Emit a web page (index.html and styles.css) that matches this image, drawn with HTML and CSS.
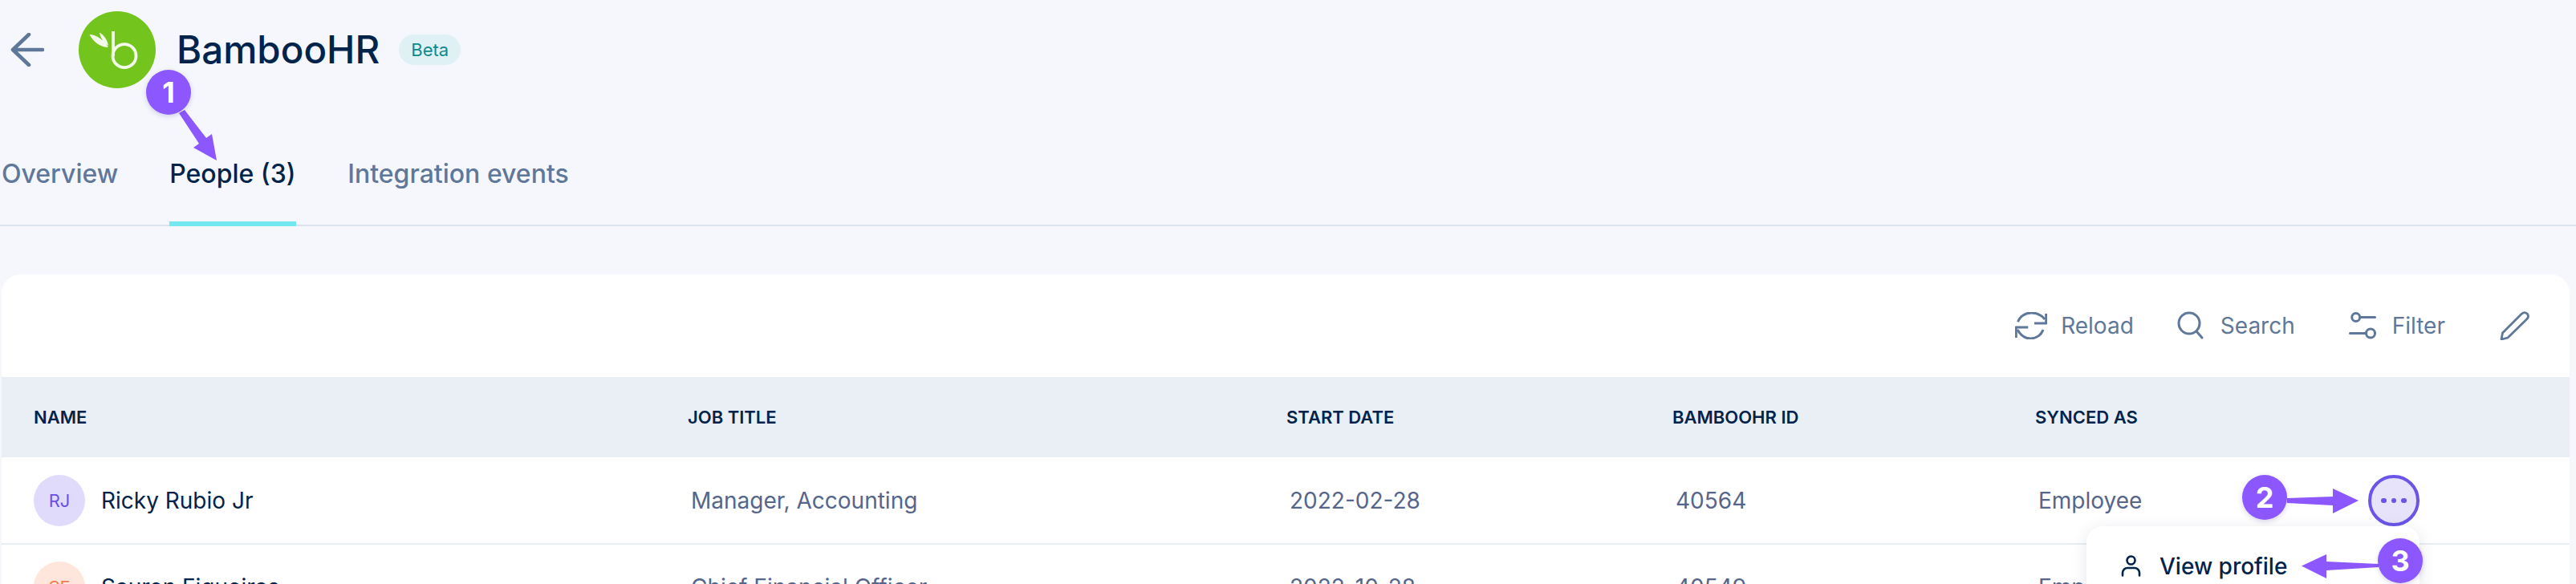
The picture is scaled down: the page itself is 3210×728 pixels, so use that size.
FILE: index.html
```html
<!DOCTYPE html>
<html lang="en">
<head>
<meta charset="utf-8">
<title>BambooHR</title>
<link rel="stylesheet" href="styles.css">
</head>
<body>
<div class="page">
  <header class="head">
    <svg class="back" viewBox="0 0 42 42" fill="none" stroke="#5f7799" stroke-width="4.600" stroke-linecap="round" stroke-linejoin="round"><path d="M23 2 3 21l20 19M3 21h37"/></svg>
    <svg class="logo" viewBox="0 0 96 96"><circle cx="48" cy="48" r="48" fill="#73c41d"/><g fill="none" stroke="#f4faea" stroke-width="3.800"><path d="M43 25v31"/><circle cx="57" cy="55.700" r="14.500"/></g><path d="M13.500 29C22 29 32 36 37 45c-10 0-19-7-23.500-16zM26 26.500C32 30 36 36 37 43c-6-4-10-10-11-16.500z" fill="#f4faea"/></svg>
    <h1 class="title">BambooHR</h1>
    <span class="beta">Beta</span>
  </header>
  <nav class="tabs">
    <a class="tab">Overview</a>
    <a class="tab active">People (3)</a>
    <a class="tab">Integration events</a>
  </nav>
  <section class="card">
    <div class="tools">
      <span class="tool reload"><svg viewBox="0 0 40 34" fill="none" stroke="#5f7799" stroke-width="3" stroke-linejoin="round"><path d="M3.600 12.300C6 5 13 1 20.500 1 27 1 33 4 37 9"/><path d="M38.700 2v12H24"/><path d="M35 22c-2.500 7-9 11-16 11-7 0-12-4-16-11"/><path d="M1.300 32V19h15"/></svg>Reload</span>
      <span class="tool search"><svg viewBox="0 0 34 36" fill="none" stroke="#5f7799" stroke-width="3" stroke-linecap="round"><circle cx="15" cy="15" r="13"/><path d="m24 25 7 8"/></svg>Search</span>
      <span class="tool filter"><svg viewBox="0 0 34 34" fill="none" stroke="#5f7799" stroke-width="3" stroke-linecap="round"><circle cx="8.700" cy="6.500" r="5"/><path d="M14 6.500h18.500M1.500 26.500H20"/><circle cx="27" cy="26.500" r="5.500"/></svg>Filter</span>
      <svg class="pen" viewBox="0 0 37 36" fill="none" stroke="#5f7799" stroke-width="2.800" stroke-linejoin="round"><path d="m2 35 1.500-8L27 3.500c2.500-2.500 5-2.500 7-.5s2 4.500-.5 7L10 33z"/></svg>
    </div>
    <div class="row hdr">
      <div>NAME</div><div>JOB TITLE</div><div>START DATE</div><div>BAMBOOHR ID</div><div>SYNCED AS</div>
    </div>
    <div class="row body">
      <div class="name"><span class="av purple">RJ</span>Ricky Rubio Jr</div>
      <div class="cell">Manager, Accounting</div>
      <div class="cell">2022-02-28</div>
      <div class="cell">40564</div>
      <div class="cell">Employee</div>
    </div>
    <div class="row body next">
      <div class="name"><span class="av orange">SF</span>Sauren Figueiras</div>
      <div class="cell">Chief Financial Officer</div>
      <div class="cell">2022-10-28</div>
      <div class="cell">40549</div>
      <div class="cell">Employee</div>
    </div>
    <button class="more"><i></i><i></i><i></i></button>
    <div class="menu"><svg viewBox="0 0 25 27" fill="none" stroke="#02234a" stroke-width="2.600" stroke-linecap="round"><circle cx="12.500" cy="6.500" r="5"/><path d="M2 25.500V22c0-3.500 3-6 6-6h9c3 0 6 2.500 6 6v3.500"/></svg>View profile</div>
  </section>
  <svg class="arrows" viewBox="0 0 3210 728" fill="#8c57ff">
    <path d="M223 141 230 137 257 172 264 167 270 200 241 184 248 179z"/>
    <path d="M2850 621 2907 619V609L2939 624 2907 640V630L2850 627z"/>
    <path d="M2964 703 2899 700V691L2868 705.500 2899 721V711L2964 707z"/>
  </svg>
  <div class="mark m1">1</div>
  <div class="mark m2">2</div>
  <div class="mark m3">3</div>
</div>
</body>
</html>
```
FILE: styles.css
```css
* { box-sizing: border-box; }
html, body { margin: 0; height: 728px; overflow: hidden; }
body { background: #f5f7fd; font-family: Inter, "Liberation Sans", sans-serif; color: #02234a; }
.page { position: relative; width: 3210px; height: 728px; overflow: hidden; }
.head { display: flex; align-items: center; height: 124px; }
.back { width: 42px; height: 42px; margin-left: 13px; }
.logo { width: 96px; height: 96px; margin-left: 43px; }
.title { margin: 0 0 0 26px; font-size: 47.500px; font-weight: 500; line-height: 1; }
.beta { margin-left: 24px; height: 38px; padding: 0 15px; border-radius: 19px; background: #e0f1f6; color: #0d8a8a; font-size: 22px; line-height: 38px; }
.tabs { display: flex; gap: 64px; height: 158px; padding: 72px 0 0 2px; margin-bottom: 60px; border-bottom: 2px solid #dde3ee; }
.tab { height: 86px; font-size: 32px; font-weight: 500; color: #5f7799; line-height: 42px; }
.tab.active { min-width: 158px; color: #02234a; border-bottom: 6px solid #73e8f0; }
.card { position: relative; height: 386px; margin: 0 0 0 2px; width: 3200px; background: #fff; border-radius: 24px 24px 0 0; }
.tools { display: flex; align-items: center; justify-content: flex-end; height: 128px; padding-right: 50px; }
.tool { display: flex; align-items: center; gap: 20px; font-size: 28px; color: #5f7799; }
.reload { gap: 17px; margin-right: 54px; }
.search { margin-right: 67px; }
.filter { margin-right: 68px; }
.reload svg { width: 40px; height: 34px; }
.search svg { width: 34px; height: 36px; }
.filter svg { width: 34px; height: 34px; }
.pen { width: 37px; height: 36px; }
.row { display: grid; grid-template-columns: 815px 746px 481px 452px 1fr; padding-left: 40px; align-items: center; }
.hdr { height: 100px; background: #eaeff5; font-size: 22px; font-weight: 600; }
.body { height: 108px; font-size: 28px; }
.next { margin-top: -1px; border-top: 2px solid #e8edf1; }
.name { display: flex; align-items: center; gap: 20px; }
.cell { padding-left: 4px; color: #56658a; }
.av { width: 64px; height: 64px; border-radius: 50%; display: flex; align-items: center; justify-content: center; font-size: 22px; }
.purple { background: #e0dbfb; color: #6a4fe8; }
.orange { background: #ffe6dc; color: #f47c55; }
.more { position: absolute; left: 2949px; top: 250px; width: 64px; height: 64px; padding: 0; border: 4px solid #6a55e8; border-radius: 50%; background: #e6e3fa; display: flex; align-items: center; justify-content: center; gap: 6px; }
.more i { width: 6.500px; height: 6.500px; border-radius: 50%; background: #6a55e8; }
.menu { position: absolute; left: 2598px; top: 314px; width: 415px; height: 110px; padding: 28px 0 0 43px; background: #fff; border-radius: 20px; box-shadow: 0 4px 20px rgba(30,50,90,.12); display: flex; align-items: flex-start; gap: 23px; font-size: 28px; font-weight: 500; line-height: 44px; }
.menu svg { width: 25px; height: 27px; margin-top: 8px; }
.mark { position: absolute; width: 56px; height: 56px; border-radius: 50%; background: #8c57ff; color: #fff; font-weight: 700; font-size: 36px; line-height: 56px; text-align: center; box-shadow: 0 2px 6px rgba(60,40,140,.2); z-index: 3; }
.m1 { left: 182px; top: 87px; }
.m2 { left: 2794px; top: 592px; }
.m3 { left: 2963px; top: 671px; }
.arrows { position: absolute; left: 0; top: 0; width: 3210px; height: 728px; z-index: 2; pointer-events: none; }
```
